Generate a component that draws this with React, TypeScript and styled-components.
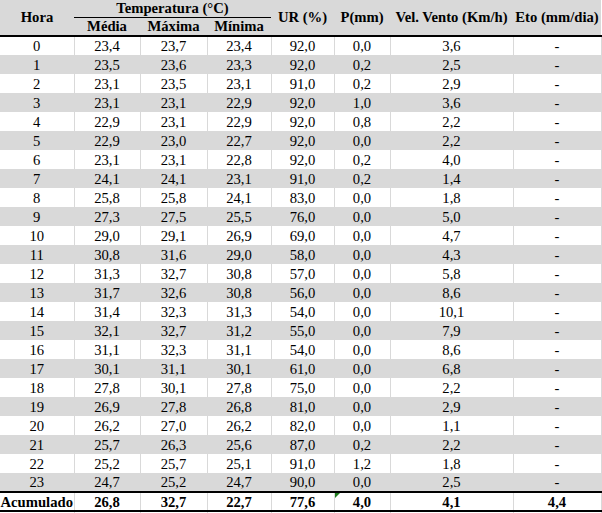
import React, { FC } from "react";
import styled, { createGlobalStyle } from "styled-components";

const GlobalStyle = createGlobalStyle`
	html, body {
		margin: 0;
		padding: 0;
		background: #ffffff;
	}
	body {
		font-family: "Liberation Serif", "Times New Roman", serif;
		color: #000000;
	}
`;

const GRAY = "#d9d9d9";

const Sheet = styled.div`
	width: 602px;
	height: 513px;
	overflow: hidden;
	background: #ffffff;
`;

const Table = styled.table`
	border-collapse: collapse;
	table-layout: fixed;
	width: 601px;
	font-size: 14.67px;
`;

const Head = styled.thead`
	background: ${GRAY};
`;

const HeadRow = styled.tr<{ $h: number }>`
	height: ${(p) => p.$h}px;
`;

const HeadCell = styled.th<{ $underline?: boolean; $bottom?: boolean }>`
	padding: 0;
	font-weight: 700;
	text-align: center;
	vertical-align: middle;
	line-height: 15px;
	white-space: nowrap;
	border-bottom: ${(p) =>
		p.$bottom ? "2px solid #000" : p.$underline ? "1px solid #000" : "none"};
`;

const Row = styled.tr<{ $shade: boolean }>`
	height: 19px;
	background: ${(p) => (p.$shade ? GRAY : "#ffffff")};
`;

const Cell = styled.td`
	padding: 0;
	text-align: center;
	vertical-align: middle;
	line-height: 16px;
	white-space: nowrap;
	border-left: 1px solid ${GRAY};
	border-right: 1px solid ${GRAY};
	&:first-child {
		border-left: none;
	}
`;

const TotalRow = styled.tr`
	height: 19px;
	background: #ffffff;
	border-top: 2px solid #000;
	border-bottom: 2px solid #000;
`;

const TotalCell = styled(Cell)`
	font-weight: 700;
	position: relative;
`;

const ErrorMark = styled.span`
	position: absolute;
	left: 0;
	top: 0;
	width: 0;
	height: 0;
	border-top: 5px solid #1e7b1e;
	border-right: 5px solid transparent;
`;

const SpacerRow = styled.tr`
	height: 19px;
`;

interface IHour {
	hora: string;
	media: string;
	maxima: string;
	minima: string;
	ur: string;
	p: string;
	vento: string;
	eto: string;
}

const raw = [
	"23,4 23,7 23,4 92,0 0,0 3,6",
	"23,5 23,6 23,3 92,0 0,2 2,5",
	"23,1 23,5 23,1 91,0 0,2 2,9",
	"23,1 23,1 22,9 92,0 1,0 3,6",
	"22,9 23,1 22,9 92,0 0,8 2,2",
	"22,9 23,0 22,7 92,0 0,0 2,2",
	"23,1 23,1 22,8 92,0 0,2 4,0",
	"24,1 24,1 23,1 91,0 0,2 1,4",
	"25,8 25,8 24,1 83,0 0,0 1,8",
	"27,3 27,5 25,5 76,0 0,0 5,0",
	"29,0 29,1 26,9 69,0 0,0 4,7",
	"30,8 31,6 29,0 58,0 0,0 4,3",
	"31,3 32,7 30,8 57,0 0,0 5,8",
	"31,7 32,6 30,8 56,0 0,0 8,6",
	"31,4 32,3 31,3 54,0 0,0 10,1",
	"32,1 32,7 31,2 55,0 0,0 7,9",
	"31,1 32,3 31,1 54,0 0,0 8,6",
	"30,1 31,1 30,1 61,0 0,0 6,8",
	"27,8 30,1 27,8 75,0 0,0 2,2",
	"26,9 27,8 26,8 81,0 0,0 2,9",
	"26,2 27,0 26,2 82,0 0,0 1,1",
	"25,7 26,3 25,6 87,0 0,2 2,2",
	"25,2 25,7 25,1 91,0 1,2 1,8",
	"24,7 25,2 24,7 90,0 0,0 2,5",
];

const hours: IHour[] = raw.map((line, i) => {
	const [media, maxima, minima, ur, p, vento] = line.split(" ");
	return { hora: String(i), media, maxima, minima, ur, p, vento, eto: "-" };
});

const widths = [74, 66, 67, 64, 63, 56, 123, 88];

const App: FC = () => {
	return (
		<Sheet>
			<GlobalStyle />
			<Table>
				<colgroup>
					{widths.map((w, i) => (
						<col key={i} style={{ width: w }} />
					))}
				</colgroup>
				<Head>
					<HeadRow $h={17}>
						<HeadCell rowSpan={2} $bottom>
							Hora
						</HeadCell>
						<HeadCell colSpan={3} $underline>
							Temperatura (°C)
						</HeadCell>
						<HeadCell rowSpan={2} $bottom>
							UR (%)
						</HeadCell>
						<HeadCell rowSpan={2} $bottom>
							P(mm)
						</HeadCell>
						<HeadCell rowSpan={2} $bottom>
							Vel. Vento (Km/h)
						</HeadCell>
						<HeadCell rowSpan={2} $bottom>
							Eto (mm/dia)
						</HeadCell>
					</HeadRow>
					<HeadRow $h={19}>
						<HeadCell $bottom>Média</HeadCell>
						<HeadCell $bottom>Máxima</HeadCell>
						<HeadCell $bottom>Mínima</HeadCell>
					</HeadRow>
				</Head>
				<tbody>
					{hours.map((h, i) => (
						<Row key={h.hora} $shade={i % 2 === 1}>
							<Cell>{h.hora}</Cell>
							<Cell>{h.media}</Cell>
							<Cell>{h.maxima}</Cell>
							<Cell>{h.minima}</Cell>
							<Cell>{h.ur}</Cell>
							<Cell>{h.p}</Cell>
							<Cell>{h.vento}</Cell>
							<Cell>{h.eto}</Cell>
						</Row>
					))}
					<TotalRow>
						<TotalCell>Acumulado</TotalCell>
						<TotalCell>26,8</TotalCell>
						<TotalCell>32,7</TotalCell>
						<TotalCell>22,7</TotalCell>
						<TotalCell>77,6</TotalCell>
						<TotalCell>
							<ErrorMark />
							4,0
						</TotalCell>
						<TotalCell>4,1</TotalCell>
						<TotalCell>4,4</TotalCell>
					</TotalRow>
					<SpacerRow>
						{widths.map((_, i) => (
							<Cell key={i} />
						))}
					</SpacerRow>
				</tbody>
			</Table>
		</Sheet>
	);
};

export default App;
